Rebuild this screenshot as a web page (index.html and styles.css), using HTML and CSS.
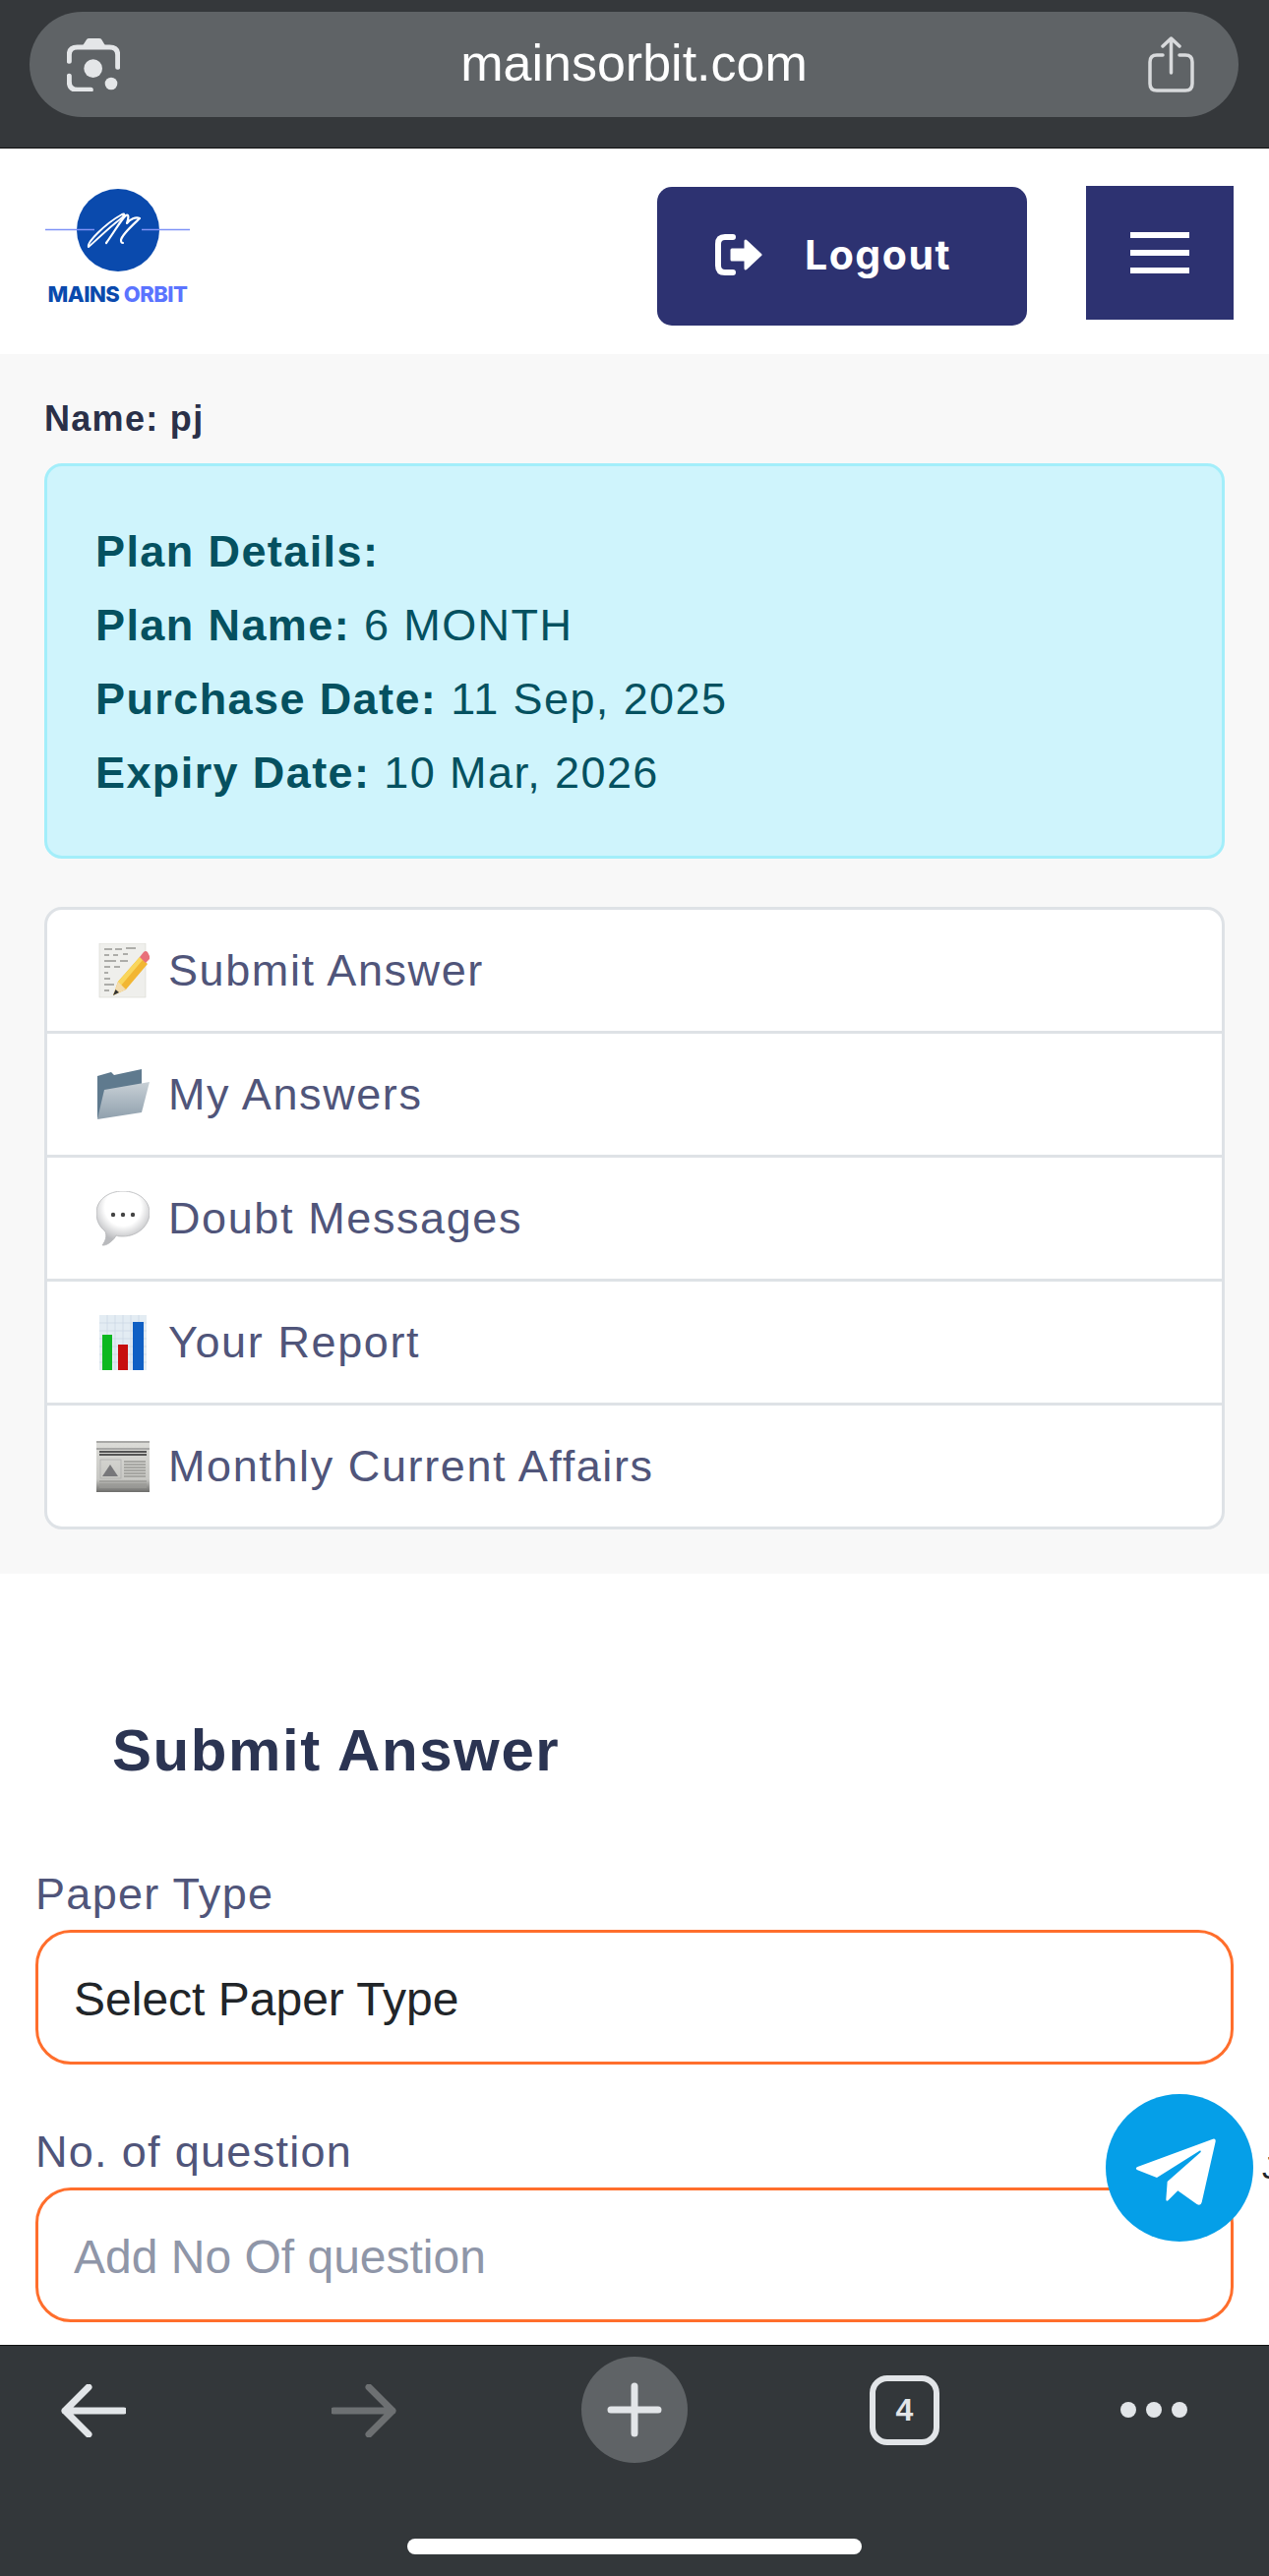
FILE: index.html
```html
<!DOCTYPE html>
<html lang="en">
<head>
  <meta charset="UTF-8">
  <title>Mains Orbit</title>
  <meta name="viewport" content="width=device-width, initial-scale=1.0">
  <link rel="stylesheet" href="styles.css">
</head>
<body>
<div class="browser-top">
  <div class="url-pill">
    <svg class="lens-icon" viewBox="0 0 162 162">
      <path class="ln" d="M7 70V50Q7 27 32 27H130Q155 27 155 50V88M7 115V132Q7 157 32 157H73"/>
      <path class="fl" d="M45 27L60 4Q62 0 68 0H98Q104 0 106 4L120 27Z"/>
      <circle class="fl" cx="80" cy="92" r="28"/>
      <circle class="fl" cx="135" cy="138" r="19"/>
    </svg>
    <span class="url-text">mainsorbit.com</span>
    <svg class="share-icon" viewBox="0 0 47 57">
      <path d="M15 19H9Q2 19 2 26V48Q2 55 9 55H38Q45 55 45 48V26Q45 19 38 19H32M23.500 37V2M15 10L23.500 2L32 10"/>
    </svg>
  </div>
</div>

<main>
  <header class="site-header">
    <a class="logo">
      <svg class="logo-mark" viewBox="0 0 147 84">
        <circle cx="74" cy="42" r="42" fill="#0a4aad"/>
        <path d="M0 41.500H50M98 41.500H147" stroke="#7f93f7" stroke-width="1.500"/>
        <path d="M44 59C42 55 60 36 78 26C82 24 80 28 76 31C64 40 50 54 44 59Z" fill="none" stroke="#fff" stroke-width="2" stroke-linejoin="round"/>
        <path d="M62 55C70 44 78 30 82 27C86 25 84 32 83 35C86 31 92 28 96 30C92 34 78 46 77 52C77 55 78 55 79 55" fill="none" stroke="#fff" stroke-width="2.200" stroke-linecap="round" stroke-linejoin="round"/>
      </svg>
      <span class="logo-text">MAINS <b>ORBIT</b></span>
    </a>
    <button class="logout-btn">
      <svg viewBox="0 0 48 42">
        <path class="bracket" d="M18 3H10Q3 3 3 10V32Q3 39 10 39H18"/>
        <path class="arrow" d="M17 16H31V7L46 21L31 35V26H17Z"/>
      </svg>
      <span>Logout</span>
    </button>
    <button class="menu-btn"><i></i><i></i><i></i></button>
  </header>

  <section class="dash">
    <div class="user-name">Name: pj</div>
    <div class="plan-card">
      <div><strong>Plan Details:</strong></div>
      <div><strong>Plan Name:</strong> 6 MONTH</div>
      <div><strong>Purchase Date:</strong> 11 Sep, 2025</div>
      <div><strong>Expiry Date:</strong> 10 Mar, 2026</div>
    </div>
    <ul class="menu-list">
      <li>
        <svg class="emoji" viewBox="0 0 54 56">
          <rect x="3" y="0" width="47" height="55" fill="#efefec" stroke="#d5d5d0" stroke-width=".6"/>
          <path d="M8 6H16M19 6H26M30 5H40M8 12H13M17 12H22M27 11H32M8 18H20M24 18H32M8 24H14M18 24H24M8 30H12M8 36H14M8 42H18M8 48H13" stroke="#6b6b66" stroke-width="1" fill="none"/>
          <path d="M17 53L22 39L44 14L52 21L30 47Z" fill="#f2b632"/>
          <path d="M22 39L44 14L47 17L25 43Z" fill="#f9d65c"/>
          <path d="M17 53L22 39L30 47Z" fill="#f3dcae"/>
          <path d="M17 53L19.500 47L23 50Z" fill="#333"/>
          <path d="M44 14L48 9Q50 7 52 9L54 13Q55 15 53 17L50 20Z" fill="#e8707a"/>
        </svg>
        <span>Submit Answer</span>
      </li>
      <li>
        <svg class="emoji" viewBox="0 0 54 52">
          <defs>
            <linearGradient id="fold" x1="0" y1="0" x2="0" y2="1"><stop offset="0" stop-color="#c8d0d6"/><stop offset="1" stop-color="#8fa0ad"/></linearGradient>
          </defs>
          <path d="M1 7L15 3L18 6L46 0L46 18L1 50Z" fill="#5f7a8e"/>
          <path d="M8 21L54 13L46 44L1 51Z" fill="url(#fold)"/>
        </svg>
        <span>My Answers</span>
      </li>
      <li>
        <svg class="emoji" viewBox="0 0 54 56">
          <defs>
            <radialGradient id="bub" cx=".5" cy=".3" r=".62"><stop offset=".55" stop-color="#fff"/><stop offset="1" stop-color="#b9babd"/></radialGradient>
          </defs>
          <path d="M27 0C42 0 54 9 54 22C54 35 42 46 27 46C24 46 22 46 20 45C18 50 10 56 6 55C9 51 11 46 9 41C3 36 0 30 0 22C0 9 12 0 27 0Z" fill="url(#bub)" stroke="#b4b5b8" stroke-width=".8"/>
          <circle cx="17" cy="24" r="2.200" fill="#444"/><circle cx="27" cy="24" r="2.200" fill="#444"/><circle cx="37" cy="24" r="2.200" fill="#444"/>
        </svg>
        <span>Doubt Messages</span>
      </li>
      <li>
        <svg class="emoji" viewBox="0 0 48 56">
          <rect width="48" height="56" fill="#e3ecf3"/>
          <path d="M0 8H48M0 16H48M0 24H48M0 32H48M0 40H48M0 48H48M8 0V56M16 0V56M24 0V56M32 0V56M40 0V56" stroke="#c6d5e3" stroke-width=".6"/>
          <rect x="3" y="20" width="10" height="36" fill="#0cb821"/>
          <rect x="19" y="30" width="10" height="26" fill="#c70f0f"/>
          <rect x="34" y="7" width="11" height="49" fill="#0f5fc4"/>
        </svg>
        <span>Your Report</span>
      </li>
      <li>
        <svg class="emoji" viewBox="0 0 54 52">
          <defs>
            <linearGradient id="news" x1="0" y1="0" x2="0" y2="1"><stop offset="0" stop-color="#dcdcd8"/><stop offset=".75" stop-color="#c8c8c4"/><stop offset="1" stop-color="#6d6d6b"/></linearGradient>
          </defs>
          <rect width="54" height="52" fill="url(#news)"/>
          <path d="M0 1H54M0 8H54" stroke="#777" stroke-width="1"/>
          <path d="M3 11H51M3 14H51" stroke="#555" stroke-width="2"/>
          <path d="M6 36L14 24L22 36Z" fill="#77777a"/>
          <path d="M28 21H50M28 24H50M28 27H50M28 30H50M28 33H50M28 36H50M3 41H51M3 44H51M3 47H51" stroke="#9a9a97" stroke-width="1.300"/>
          <rect x="4" y="19" width="21" height="19" fill="none" stroke="#aaa" stroke-width=".7"/>
        </svg>
        <span>Monthly Current Affairs</span>
      </li>
    </ul>
  </section>

  <section class="answer-form">
    <h2>Submit Answer</h2>
    <label for="paperType">Paper Type</label>
    <select id="paperType" class="field"><option>Select Paper Type</option></select>
    <label for="qCount">No. of question</label>
    <input id="qCount" class="field" placeholder="Add No Of question">
  </section>

  <a class="tg-btn">
    <svg viewBox="0 0 450 450">
      <circle cx="225" cy="225" r="225" fill="#059fe8"/>
      <path fill="#fff" d="M327 137L97 222Q88 227 97 232L156 255L286 173Q292 172 290 177L188 267L184 322Q184 328 190 325L220 295L278 336Q290 342 293 330L335 145Q336 135 327 137Z"/>
    </svg>
  </a>
  <span class="tg-label">Join</span>
</main>

<div class="browser-bottom">
  <div class="toolbar">
    <svg class="tool-arrow" viewBox="0 0 66 54"><path d="M64 27H4M28 3L4 27L28 51"/></svg>
    <svg class="tool-arrow dim" viewBox="0 0 66 54"><path d="M2 27H62M38 3L62 27L38 51"/></svg>
    <div class="new-tab"><svg viewBox="0 0 56 56"><path d="M28 4V52M4 28H52"/></svg></div>
    <div class="tab-count">4</div>
    <div class="dots"><i></i><i></i><i></i></div>
  </div>
  <div class="home-bar"></div>
</div>
</body>
</html>
```

FILE: styles.css
```css
* { box-sizing: border-box; }
html, body { margin: 0; padding: 0; }
body { width: 1290px; height: 2619px; display: flex; flex-direction: column; overflow: hidden; font-family: "Liberation Sans", Arial, sans-serif; background: #fff; }

/* browser chrome */
.browser-top { height: 151px; flex: none; background: #35383b; padding: 12px 31px 0 30px; border-bottom: 1px solid #111; }
.url-pill { height: 107px; border-radius: 54px; background: #5f6366; display: flex; align-items: center; justify-content: space-between; padding: 0 45px 0 38px; }
.lens-icon { width: 54px; height: 54px; }
.lens-icon .ln { fill: none; stroke: #e4e6e8; stroke-width: 15; stroke-linecap: round; }
.lens-icon .fl { fill: #e4e6e8; }
.url-text { color: #fff; font-size: 52px; padding-bottom: 3px; }
.share-icon { width: 47px; height: 57px; }
.share-icon path { fill: none; stroke: #d8dadc; stroke-width: 3.5; stroke-linecap: round; stroke-linejoin: round; }

.browser-bottom { height: 235px; flex: none; background: #33373a; border-top: 1px solid #111; display: flex; flex-direction: column; align-items: center; }
.toolbar { width: 100%; height: 196px; padding: 11px 0 0 62px; display: flex; align-items: flex-start; }
.tool-arrow { width: 66px; height: 54px; margin-top: 28px; flex: none; }
.tool-arrow path { fill: none; stroke: #e2e5e8; stroke-width: 7; stroke-linecap: round; stroke-linejoin: round; }
.tool-arrow.dim { margin-left: 209px; }
.tool-arrow.dim path { stroke: #6d7072; }
.new-tab { width: 108px; height: 108px; margin-left: 188px; flex: none; border-radius: 50%; background: #5f6366; display: flex; align-items: center; justify-content: center; }
.new-tab svg { width: 56px; height: 56px; }
.new-tab path { fill: none; stroke: #e2e5e8; stroke-width: 7; stroke-linecap: round; }
.tab-count { width: 71px; height: 71px; margin: 19px 0 0 185px; flex: none; border: 6px solid #e2e5e8; border-radius: 18px; color: #e2e5e8; font-size: 32px; font-weight: bold; display: flex; align-items: center; justify-content: center; }
.dots { display: flex; gap: 10px; margin: 46px 0 0 184px; }
.dots i { width: 16px; height: 16px; border-radius: 50%; background: #e2e5e8; }
.home-bar { width: 462px; height: 16px; border-radius: 8px; background: #fff; }

/* page */
main { flex: 1; position: relative; overflow: hidden; }
.site-header { height: 209px; display: flex; align-items: flex-start; padding: 38px 36px 0 46px; background: #fff; }
.logo { width: 147px; display: block; margin-top: 3px; }
.logo-mark { display: block; width: 147px; height: 84px; }
.logo-text { display: block; margin-top: 11px; text-align: center; font-family: Inter, sans-serif; font-weight: 800; font-size: 22px; line-height: 24px; letter-spacing: -.5px; color: #0a4aad; white-space: nowrap; }
.logo-text b { color: #5b74ff; font-weight: 800; }
.logout-btn { margin-left: auto; margin-top: 1px; width: 376px; height: 141px; border: 0; border-radius: 15px; background: #2d3271; color: #fff; display: flex; align-items: center; padding: 0 0 4px 59px; gap: 43px; font-family: Inter, sans-serif; font-weight: 700; font-size: 41px; letter-spacing: 1.5px; }
.logout-btn svg { width: 48px; height: 42px; }
.logout-btn .bracket { fill: none; stroke: #fff; stroke-width: 6; stroke-linecap: round; }
.logout-btn .arrow { fill: #fff; stroke: #fff; stroke-width: 3; stroke-linejoin: round; }
.menu-btn { margin-left: 60px; width: 150px; height: 136px; border: 0; background: #2d3271; display: flex; flex-direction: column; justify-content: center; align-items: center; gap: 12px; padding: 0; }
.menu-btn i { display: block; width: 60px; height: 6px; background: #fff; }

.dash { background: #f8f8f8; padding: 39px 45px 45px; height: 1240px; letter-spacing: 1.4px; }
.user-name { font-size: 36px; font-weight: bold; line-height: 54px; letter-spacing: 1.3px; color: #2a3048; margin-bottom: 18px; }
.plan-card { height: 402px; border: 3px solid #a3eefa; border-radius: 18px; background: #cff4fc; color: #055160; font-size: 45px; line-height: 75px; padding: 49px 49px 0; }
.menu-list { list-style: none; margin: 49px 0 0; padding: 0; background: #fff; border: 3px solid #dee2e6; border-radius: 18px; color: #50557a; font-size: 45px; letter-spacing: 1.6px; }
.menu-list li { height: 126px; padding-left: 50px; display: flex; align-items: center; border-bottom: 3px solid #dee2e6; }
.menu-list li:last-child { height: 123px; border-bottom: 0; }
.emoji { width: 54px; height: 56px; margin-right: 19px; flex: none; }

.answer-form { padding: 145px 36px 0; background: #fff; letter-spacing: 1.3px; }
.answer-form h2 { margin: 0 0 81px 78px; font-size: 60px; line-height: 70px; letter-spacing: 1.6px; color: #2b3452; }
.answer-form label { display: block; font-size: 45px; line-height: 60px; color: #50557a; margin-bottom: 6px; }
.field { display: block; width: 100%; height: 137px; margin-bottom: 59px; padding: 3px 36px 0; border: 3px solid #ff6e2c; border-radius: 36px; background: #fff; font-family: "Liberation Sans", Arial, sans-serif; font-size: 48px; color: #212529; appearance: none; outline: none; }
.field::placeholder { color: #8f96a8; opacity: 1; }

.tg-btn { position: absolute; left: 1124px; top: 1978px; width: 150px; height: 150px; display: block; }
.tg-btn svg { display: block; width: 150px; height: 150px; }
.tg-label { position: absolute; left: 1283px; top: 2035px; font-size: 32px; color: #212529; }
```
